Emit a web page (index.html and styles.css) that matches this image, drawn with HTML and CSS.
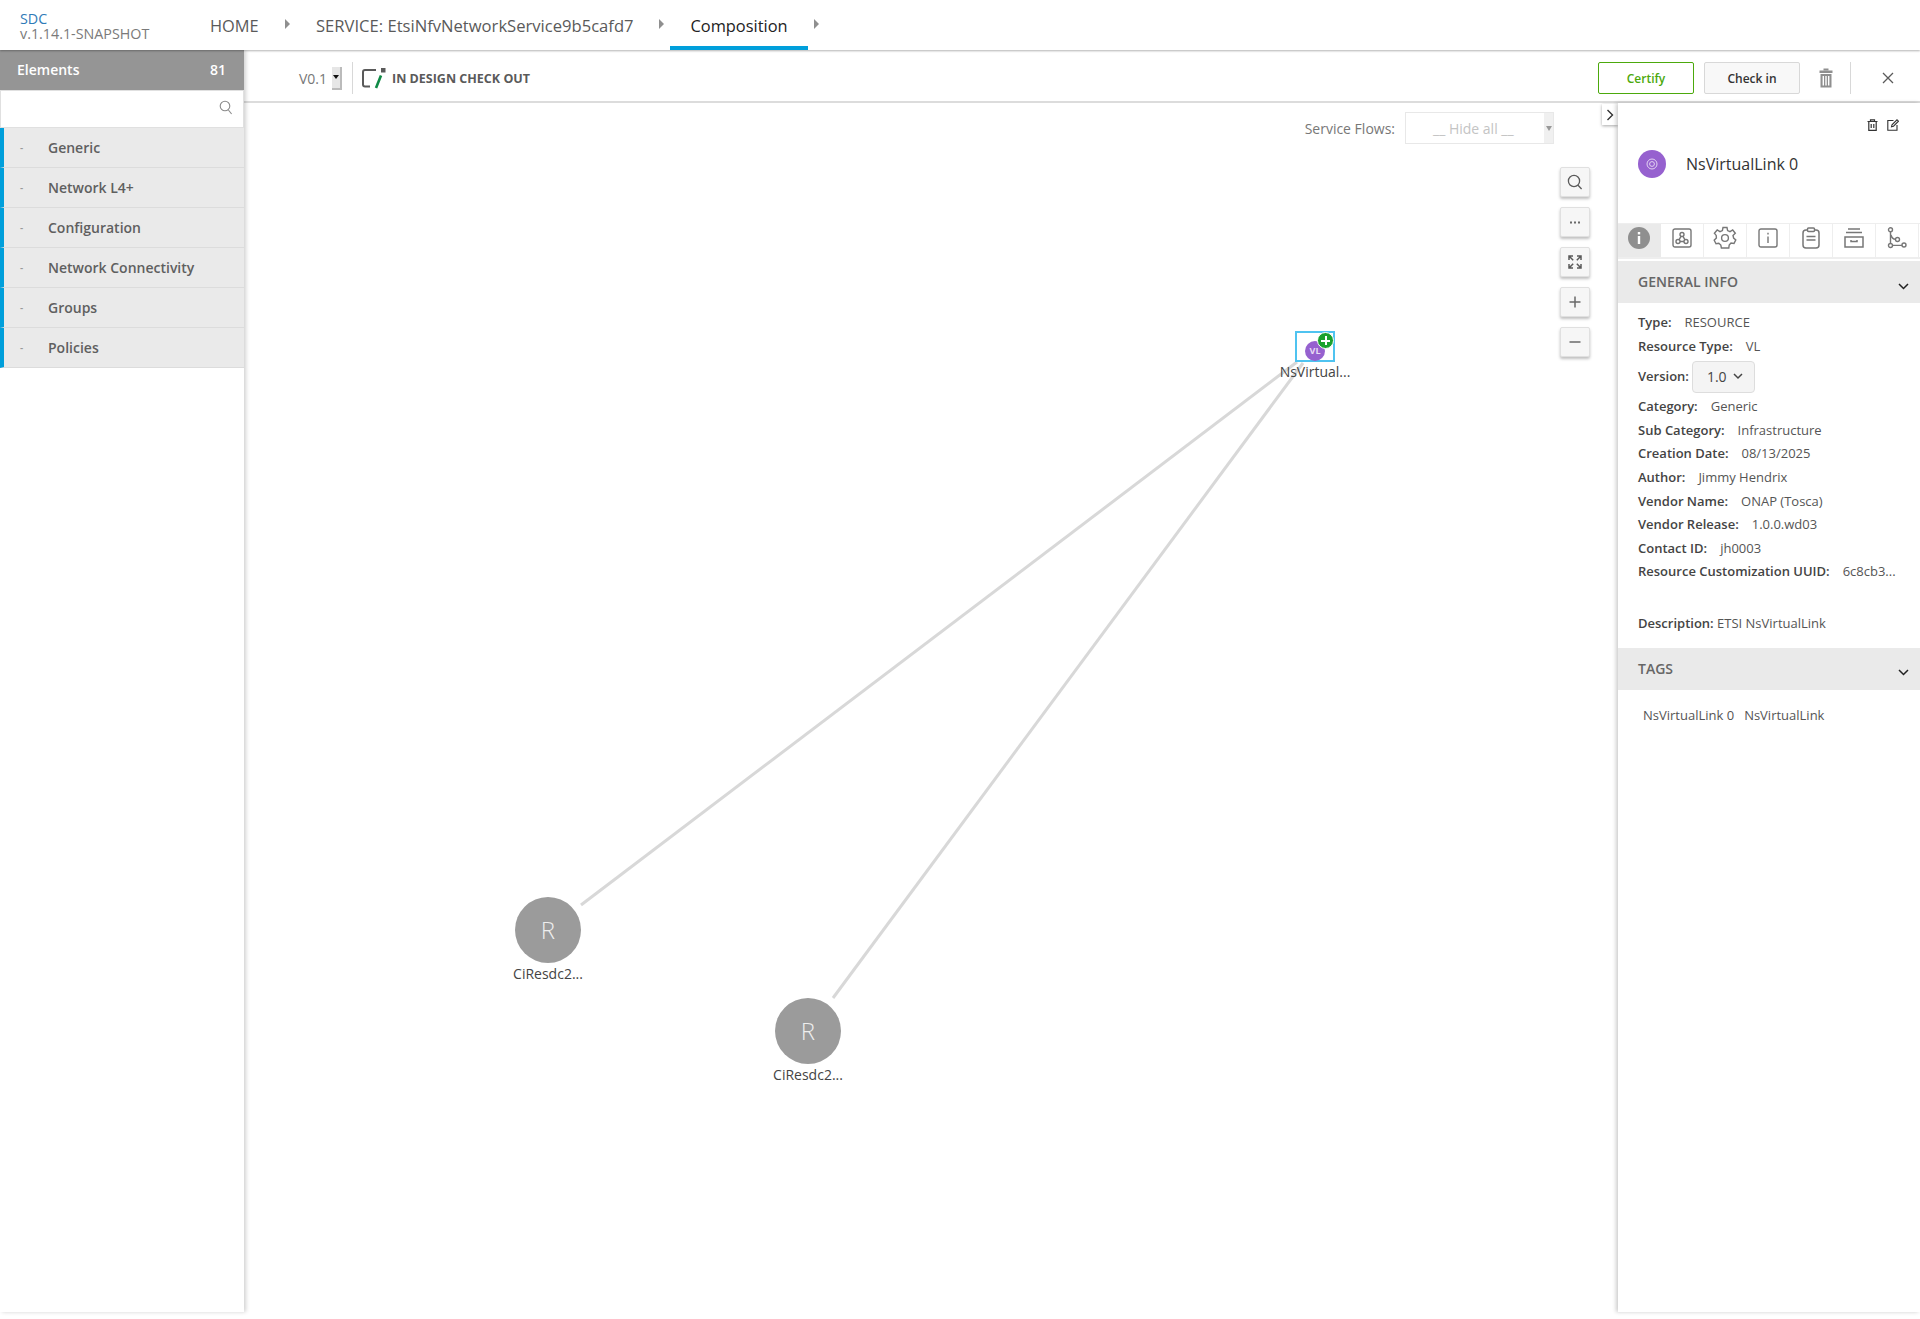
FILE: index.html
```html
<!DOCTYPE html>
<html lang="en">
<head>
    <meta charset="UTF-8">
    <meta name="viewport" content="width=device-width, initial-scale=1.0">
    <title>SDC Composition</title>
    <link rel="stylesheet" href="styles.css">
</head>
<body>
    <div class="header">
        <div class="brand">
            <div class="brand-name">SDC</div>
            <div class="brand-version">v.1.14.1-SNAPSHOT</div>
        </div>
        <div class="nav">
            <a class="nav-item nav-home">HOME</a>
            <span class="nav-arrow"></span>
            <a class="nav-item nav-service">SERVICE: EtsiNfvNetworkService9b5cafd7</a>
            <span class="nav-arrow"></span>
            <a class="nav-item nav-active">Composition</a>
            <span class="nav-arrow"></span>
        </div>
    </div>

    <div class="page">
        <div class="sidebar">
            <div class="sidebar-title"><span>Elements</span><span>81</span></div>
            <div class="sidebar-search">
                <svg width="14" height="15" viewBox="0 0 14 15" fill="none" stroke="#8a8a8a" stroke-width="1.1"><circle cx="6" cy="6" r="4.8"/><path d="M9.4 10 L12.6 14"/></svg>
            </div>
            <div class="group"><span class="group-mark">-</span>Generic</div>
            <div class="group"><span class="group-mark">-</span>Network L4+</div>
            <div class="group"><span class="group-mark">-</span>Configuration</div>
            <div class="group"><span class="group-mark">-</span>Network Connectivity</div>
            <div class="group"><span class="group-mark">-</span>Groups</div>
            <div class="group"><span class="group-mark">-</span>Policies</div>
        </div>

        <div class="workspace">
            <div class="toolbar">
                <div class="version-pick">
                    <span>V0.1</span>
                    <span class="mini-select"><i></i></span>
                </div>
                <div class="status">
                    <svg width="25" height="22" viewBox="0 0 25 22" fill="none">
                        <path d="M15 3 H4 Q2 3 2 5 V17.5 Q2 19.5 4 19.5 H9" stroke="#5a5a5a" stroke-width="2"/>
                        <rect x="20" y="1" width="4.5" height="4.5" fill="#5a5a5a"/>
                        <path d="M20 8.5 L15 21" stroke="#0f8a46" stroke-width="2.6"/>
                    </svg>
                    <span>IN DESIGN CHECK OUT</span>
                </div>
                <div class="toolbar-actions">
                    <button class="btn btn-certify">Certify</button>
                    <button class="btn btn-checkin">Check in</button>
                    <svg class="toolbar-trash" width="14" height="20" viewBox="0 0 14 20" fill="#8f8f8f">
                        <rect x="4.5" y="0.5" width="5" height="2"/>
                        <rect x="0.5" y="2.5" width="13" height="2.5"/>
                        <path d="M1.5 6 H12.5 V19.5 H1.5 Z M3.6 8 V17.5 H5 V8 Z M6.3 8 V17.5 H7.7 V8 Z M9 8 V17.5 H10.4 V8 Z" fill-rule="evenodd"/>
                    </svg>
                    <div class="toolbar-close">
                        <svg width="12" height="12" viewBox="0 0 12 12" stroke="#5a5a5a" stroke-width="1.3"><path d="M1 1 L11 11 M11 1 L1 11"/></svg>
                    </div>
                </div>
            </div>

            <div class="work-body">
                <div class="canvas">
                    <svg class="links" width="1374" height="1209">
                        <line x1="337" y1="802" x2="1053" y2="259"/>
                        <line x1="589" y1="895" x2="1059" y2="260"/>
                    </svg>

                    <div class="node" style="left:1011px;top:228px">
                        <div class="node-box"><span class="node-vl">VL</span><span class="node-plus"></span></div>
                        <div class="node-label">NsVirtual...</div>
                    </div>
                    <div class="node" style="left:244px;top:794px">
                        <div class="node-res">R</div>
                        <div class="node-label">CiResdc2...</div>
                    </div>
                    <div class="node" style="left:504px;top:895px">
                        <div class="node-res">R</div>
                        <div class="node-label">CiResdc2...</div>
                    </div>

                    <div class="flows">
                        <span class="flows-label">Service Flows:</span>
                        <div class="flows-select"><span>__ Hide all __</span><i></i></div>
                    </div>

                    <div class="zoom-tools">
                        <div class="zoom-btn"><svg width="16" height="16" viewBox="0 0 16 16" fill="none" stroke="#5a5a5a" stroke-width="1.3"><circle cx="7" cy="7" r="5.6"/><path d="M11 11.2 L14.6 15"/></svg></div>
                        <div class="zoom-btn"><svg width="10" height="3" viewBox="0 0 10 3" fill="#6a6a6a"><rect x="0" y="0.5" width="2" height="2"/><rect x="4" y="0.5" width="2" height="2"/><rect x="8" y="0.5" width="2" height="2"/></svg></div>
                        <div class="zoom-btn"><svg width="14" height="14" viewBox="0 0 14 14" fill="none" stroke="#5a5a5a" stroke-width="1.5"><path d="M1 5 V1 H5 M1 1 L5.2 5.2 M9 1 H13 V5 M13 1 L8.8 5.2 M1 9 V13 H5 M1 13 L5.2 8.8 M13 9 V13 H9 M13 13 L8.8 8.8"/></svg></div>
                        <div class="zoom-btn"><svg width="12" height="12" viewBox="0 0 12 12" stroke="#6a6a6a" stroke-width="1.5"><path d="M6 0.5 V11.5 M0.5 6 H11.5"/></svg></div>
                        <div class="zoom-btn"><svg width="12" height="12" viewBox="0 0 12 12" stroke="#6a6a6a" stroke-width="1.5"><path d="M0.5 6 H11.5"/></svg></div>
                    </div>

                    <div class="collapse-tab">
                        <svg width="8" height="12" viewBox="0 0 8 12" fill="none" stroke="#333" stroke-width="1.4"><path d="M1.5 1 L6.5 6 L1.5 11"/></svg>
                    </div>
                </div>

                <div class="details">
                    <div class="details-actions">
                        <svg width="11" height="12" viewBox="0 0 11 12" fill="none" stroke="#333" stroke-width="1.2"><path d="M0.5 2.5 H10.5 M3.5 2.5 V0.8 H7.5 V2.5 M1.8 2.5 V11.3 H9.2 V2.5 M4.2 5 V9 M6.8 5 V9"/></svg>
                        <svg width="12" height="12" viewBox="0 0 12 12" fill="none" stroke="#333" stroke-width="1.1"><path d="M6.5 1.5 H0.8 V11.2 H10 V6"/><path d="M4.5 7.8 L5 5.8 L10 0.8 L11.5 2.2 L6.5 7.2 Z"/></svg>
                    </div>
                    <div class="details-title">
                        <span class="title-badge">
                            <svg width="12" height="12" viewBox="0 0 12 12" fill="none" stroke="#e4d4f2"><circle cx="6" cy="6" r="5"/><circle cx="6" cy="6" r="2.4"/></svg>
                        </span>
                        <span class="title-text">NsVirtualLink 0</span>
                    </div>

                    <div class="tabs">
                        <div class="tab tab-active">
                            <svg width="24" height="24" viewBox="0 0 24 24"><circle cx="12" cy="12" r="11" fill="#8f8f8f"/><rect x="10.8" y="10" width="2.4" height="8" fill="#fff"/><rect x="10.8" y="6" width="2.4" height="2.4" fill="#fff"/></svg>
                        </div>
                        <div class="tab">
                            <svg width="20" height="20" viewBox="0 0 20 20" fill="none" stroke="#777" stroke-width="1.4"><rect x="1" y="1" width="18" height="18" rx="2"/><circle cx="10" cy="6.5" r="2"/><circle cx="6" cy="13.5" r="2"/><circle cx="14" cy="13.5" r="2"/><path d="M9 8.3 L7 11.8 M11 8.3 L13 11.8 M8 13.5 H12"/></svg>
                        </div>
                        <div class="tab">
                            <svg width="24" height="24" viewBox="0 0 24 24" fill="none" stroke="#777" stroke-width="1.4"><circle cx="12" cy="12" r="3.4"/><path d="M10 1.5 H14 L14.6 4.6 L17 5.7 L19.7 4 L22.3 7.2 L20 9.4 L20.6 12 L22.8 13.9 L21 17.5 L18 17 L16.2 19 L15.8 22 H12 H8.4 L7.8 19 L5.8 17.2 L3 17.8 L1.2 14.2 L3.4 12 L3.2 9.4 L1.4 7.2 L4.2 4 L7 5.7 L9.4 4.6 Z"/></svg>
                        </div>
                        <div class="tab">
                            <svg width="20" height="20" viewBox="0 0 20 20" fill="none" stroke="#777" stroke-width="1.4"><rect x="1" y="1" width="18" height="18" rx="2"/><path d="M10 8.5 V15 M10 4.8 V6.6"/></svg>
                        </div>
                        <div class="tab">
                            <svg width="18" height="22" viewBox="0 0 18 22" fill="none" stroke="#777" stroke-width="1.5"><rect x="1" y="3" width="16" height="18" rx="3"/><rect x="5.5" y="1" width="7" height="3.5" rx="1" fill="#fff"/><path d="M4.5 9.5 H13.5 M4.5 13 H13.5"/></svg>
                        </div>
                        <div class="tab">
                            <svg width="20" height="20" viewBox="0 0 20 20" fill="none" stroke="#777" stroke-width="1.5"><path d="M4 1 H16 M2 4.5 H18"/><path d="M1 9 H19 V19 H1 Z M7 12 V13.5 H13 V12"/></svg>
                        </div>
                        <div class="tab">
                            <svg width="20" height="22" viewBox="0 0 20 22" fill="none" stroke="#777" stroke-width="1.4"><circle cx="3.5" cy="2.8" r="2"/><circle cx="3.5" cy="18.5" r="2"/><circle cx="17" cy="18" r="2"/><circle cx="10.5" cy="12.5" r="2"/><path d="M3.5 4.8 V16.5 M5.5 18.4 H15 M4 8 Q5 12 8.6 12.4"/></svg>
                        </div>
                    </div>

                    <div class="section-head">
                        <span>GENERAL INFO</span>
                        <svg width="11" height="7" viewBox="0 0 11 7" fill="none" stroke="#222" stroke-width="1.5"><path d="M1 1 L5.5 5.5 L10 1"/></svg>
                    </div>
                    <div class="info">
                        <div class="info-row"><b>Type:</b><span>RESOURCE</span></div>
                        <div class="info-row"><b>Resource Type:</b><span>VL</span></div>
                        <div class="info-row row-version"><b>Version:</b>
                            <div class="version-select">1.0
                                <svg width="10" height="7" viewBox="0 0 10 7" fill="none" stroke="#444" stroke-width="1.5"><path d="M1 1 L5 5 L9 1"/></svg>
                            </div>
                        </div>
                        <div class="info-row"><b>Category:</b><span>Generic</span></div>
                        <div class="info-row"><b>Sub Category:</b><span>Infrastructure</span></div>
                        <div class="info-row"><b>Creation Date:</b><span>08/13/2025</span></div>
                        <div class="info-row"><b>Author:</b><span>Jimmy Hendrix</span></div>
                        <div class="info-row"><b>Vendor Name:</b><span>ONAP (Tosca)</span></div>
                        <div class="info-row"><b>Vendor Release:</b><span>1.0.0.wd03</span></div>
                        <div class="info-row"><b>Contact ID:</b><span>jh0003</span></div>
                        <div class="info-row"><b>Resource Customization UUID:</b><span>6c8cb3...</span></div>
                        <div class="info-desc"><b>Description:</b> ETSI NsVirtualLink</div>
                    </div>
                    <div class="section-head section-tags">
                        <span>TAGS</span>
                        <svg width="11" height="7" viewBox="0 0 11 7" fill="none" stroke="#222" stroke-width="1.5"><path d="M1 1 L5.5 5.5 L10 1"/></svg>
                    </div>
                    <div class="tag-list"><span>NsVirtualLink 0</span><span>NsVirtualLink</span></div>
                </div>
            </div>
        </div>
    </div>
</body>
</html>
```

FILE: styles.css
```css
* {
    box-sizing: border-box;
}

body {
    font-family: "Open Sans", sans-serif;
    margin: 0;
    height: 1319px;
    overflow: hidden;
    background-color: #fff;
    color: #5a5a5a;
}

.header {
    display: flex;
    height: 50px;
    background-color: #fff;
    box-shadow: 0 1px 2px rgba(0, 0, 0, 0.3);
    position: relative;
    z-index: 3;
}

.brand {
    width: 210px;
    padding: 11px 0 0 20px;
    font-size: 14.3px;
    line-height: 15px;
}

.brand-name {
    color: #2f7bb8;
}

.brand-version {
    color: #7a7a7a;
}

.nav {
    display: flex;
    font-size: 16.4px;
    line-height: 52px;
    color: #5a5a5a;
}

.nav-item {
    display: block;
    height: 50px;
}

.nav-home {
    width: 75px;
}

.nav-service {
    margin-left: 26px;
    width: 343px;
    font-size: 16.6px;
}

.nav-active {
    color: #222;
    font-weight: 500;
    width: 138px;
    margin-left: 6px;
    text-align: center;
    border-bottom: 4px solid #009fdb;
}

.nav-arrow {
    width: 0;
    height: 0;
    margin-top: 19px;
    border-left: 5px solid #8f8f8f;
    border-top: 5px solid transparent;
    border-bottom: 5px solid transparent;
    flex-shrink: 0;
}

.nav-active + .nav-arrow {
    margin-left: 6px;
}

.page {
    display: flex;
    height: 1262px;
}

.sidebar {
    width: 244px;
    flex-shrink: 0;
    box-shadow: 2px 0 4px rgba(0, 0, 0, 0.18);
    position: relative;
    z-index: 2;
}

.sidebar-title {
    display: flex;
    justify-content: space-between;
    align-items: center;
    height: 40px;
    padding: 0 18px 1px 17px;
    background-color: #959595;
    color: #fff;
    font-size: 14px;
    font-weight: 600;
}

.sidebar-search {
    display: flex;
    justify-content: flex-end;
    align-items: center;
    height: 38px;
    padding: 0 10px 4px 0;
    border: 1px solid #e0e0e0;
    background-color: #fff;
}

.group {
    display: flex;
    align-items: center;
    height: 40px;
    background-color: #eaeaea;
    border-left: 4px solid #009fdb;
    border-bottom: 1px solid #dcdcdc;
    font-size: 14px;
    font-weight: 600;
    color: #5f5f5f;
}

.group-mark {
    width: 44px;
    padding-left: 16px;
    font-size: 10px;
    color: #999;
}

.workspace {
    flex: 1;
    display: flex;
    flex-direction: column;
    min-width: 0;
}

.toolbar {
    display: flex;
    align-items: center;
    height: 53px;
    padding-top: 5px;
    flex-shrink: 0;
    border-bottom: 2px solid #dcdcdc;
}

.version-pick {
    display: flex;
    align-items: center;
    gap: 5px;
    margin-left: 55px;
    padding-right: 10px;
    height: 32px;
    border-right: 1px solid #d8d8d8;
    font-size: 14px;
    color: #777;
}

.mini-select {
    display: flex;
    align-items: center;
    justify-content: center;
    width: 10px;
    height: 23px;
    background-color: #e6e6e6;
    border-right: 2px solid #bbb;
    border-bottom: 2px solid #bbb;
}

.mini-select i {
    border-top: 4px solid #111;
    border-left: 3px solid transparent;
    border-right: 3px solid transparent;
}

.status {
    display: flex;
    align-items: center;
    gap: 6px;
    margin-left: 8px;
    font-size: 12.5px;
    font-weight: 700;
    color: #5a5a5a;
}

.toolbar-actions {
    display: flex;
    align-items: center;
    margin-left: auto;
}

.btn {
    width: 96px;
    height: 32px;
    padding: 0;
    margin-right: 10px;
    font-family: inherit;
    font-size: 12px;
    font-weight: 600;
    border-radius: 2px;
    background-color: #fff;
}

.btn-certify {
    color: #4ca90c;
    border: 1px solid #4ca90c;
}

.btn-checkin {
    color: #333;
    background-color: #f8f8f8;
    border: 1px solid #d8d8d8;
}

.toolbar-trash {
    margin-left: 9px;
}

.toolbar-close {
    display: flex;
    align-items: center;
    height: 32px;
    margin-left: 17px;
    padding: 0 26px 0 31px;
    border-left: 1px solid #d8d8d8;
}

.work-body {
    flex: 1;
    display: flex;
    min-height: 0;
}

.canvas {
    flex: 1;
    position: relative;
}

.links {
    position: absolute;
    left: 0;
    top: 0;
}

.links line {
    stroke: #d8d8d8;
    stroke-width: 3;
}

.node {
    position: absolute;
    width: 120px;
    text-align: center;
}

.node-box {
    position: relative;
    width: 40px;
    height: 31px;
    margin: 0 auto;
    border: 2px solid #4fc3f0;
}

.node-vl {
    position: absolute;
    left: 8px;
    top: 8px;
    width: 20px;
    height: 20px;
    border-radius: 50%;
    background-color: #9661cf;
    color: #e8dcf5;
    font-size: 9px;
    font-weight: 700;
    line-height: 20px;
}

.node-plus {
    position: absolute;
    left: 20px;
    top: -1px;
    width: 17px;
    height: 17px;
    border-radius: 50%;
    border: 1px solid #fff;
    background: linear-gradient(#fff, #fff) center / 9px 2px no-repeat,
                linear-gradient(#fff, #fff) center / 2px 9px no-repeat,
                #1ba12d;
}

.node-label {
    font-size: 14px;
    line-height: 20px;
    color: #444;
}

.node-res {
    width: 66px;
    height: 66px;
    margin: 0 auto 1px;
    border-radius: 50%;
    background-color: #9b9b9b;
    color: #eee;
    font-size: 24px;
    font-weight: 300;
    line-height: 66px;
}

.flows {
    position: absolute;
    top: 9px;
    right: 64px;
    display: flex;
    align-items: center;
    gap: 10px;
}

.flows-label {
    font-size: 14px;
    color: #777;
}

.flows-select {
    display: flex;
    align-items: center;
    justify-content: space-between;
    position: relative;
    width: 149px;
    height: 32px;
    padding-left: 27px;
    border: 1px solid #e8e8e8;
    font-size: 14px;
    color: #c4c4c4;
}

.flows-select i {
    width: 9px;
    height: 100%;
    background-color: #f0f0f0;
}

.flows-select i::after {
    content: "";
    position: absolute;
    right: 1px;
    top: 13px;
    border-top: 5px solid #999;
    border-left: 3px solid transparent;
    border-right: 3px solid transparent;
}

.zoom-tools {
    position: absolute;
    top: 64px;
    right: 28px;
    display: flex;
    flex-direction: column;
    gap: 10px;
}

.zoom-btn {
    display: flex;
    align-items: center;
    justify-content: center;
    width: 30px;
    height: 30px;
    border: 1px solid #e0e0e0;
    border-radius: 2px;
    background-color: #f6f6f6;
    box-shadow: 0 2px 3px rgba(0, 0, 0, 0.25);
}

.collapse-tab {
    position: absolute;
    top: 1px;
    right: 0;
    display: flex;
    align-items: center;
    justify-content: center;
    width: 16px;
    height: 21px;
    background-color: #fff;
    box-shadow: 0 1px 3px rgba(0, 0, 0, 0.35);
}

.details {
    width: 302px;
    flex-shrink: 0;
    background-color: #fff;
    box-shadow: -2px 0 4px rgba(0, 0, 0, 0.2);
    position: relative;
}

.details-actions {
    display: flex;
    justify-content: flex-end;
    gap: 9px;
    padding: 16px 21px 0 0;
    height: 39px;
}

.details-title {
    display: flex;
    align-items: center;
    height: 43px;
    padding-left: 20px;
}

.title-badge {
    display: flex;
    align-items: center;
    justify-content: center;
    width: 28px;
    height: 28px;
    border-radius: 50%;
    background-color: #9661cf;
}

.title-text {
    margin-left: 20px;
    font-size: 16px;
    color: #333;
}

.tabs {
    display: flex;
    height: 36px;
    margin-top: 38px;
    border-top: 1px solid #eee;
    border-bottom: 2px solid #eee;
}

.tab {
    display: flex;
    align-items: center;
    justify-content: center;
    width: 43px;
    padding-bottom: 5px;
    border-right: 1px solid #eee;
}

.tab-active {
    background-color: #eaeaea;
    border-right: none;
    justify-content: flex-start;
    padding-left: 9px;
}

.section-head {
    display: flex;
    justify-content: space-between;
    align-items: center;
    height: 42px;
    margin-top: 2px;
    padding: 0 11px 1px 20px;
    background-color: #eaeaea;
    font-size: 14px;
    font-weight: 600;
    color: #666;
}

.section-head svg {
    margin-top: 9px;
}

.info {
    padding: 8px 0 0 20px;
    font-size: 13px;
    color: #555;
}

.info b {
    font-weight: 600;
    color: #444;
}

.info-row {
    display: flex;
    height: 23.6px;
    line-height: 23.6px;
}

.info-row span {
    margin-left: 13px;
}

.row-version {
    align-items: center;
    height: 37px;
}

.version-select {
    display: flex;
    align-items: center;
    gap: 6px;
    width: 63px;
    height: 32px;
    margin-left: 3px;
    padding-left: 14px;
    border: 1px solid #ddd;
    border-radius: 4px;
    background-color: #f4f4f4;
    font-size: 14px;
    color: #444;
}

.info-desc {
    margin-top: 27px;
    line-height: 24px;
}

.section-tags {
    margin-top: 13px;
}

.tag-list {
    display: flex;
    gap: 10px;
    padding: 15px 0 0 25px;
    font-size: 13px;
    line-height: 20px;
    color: #555;
}
```
